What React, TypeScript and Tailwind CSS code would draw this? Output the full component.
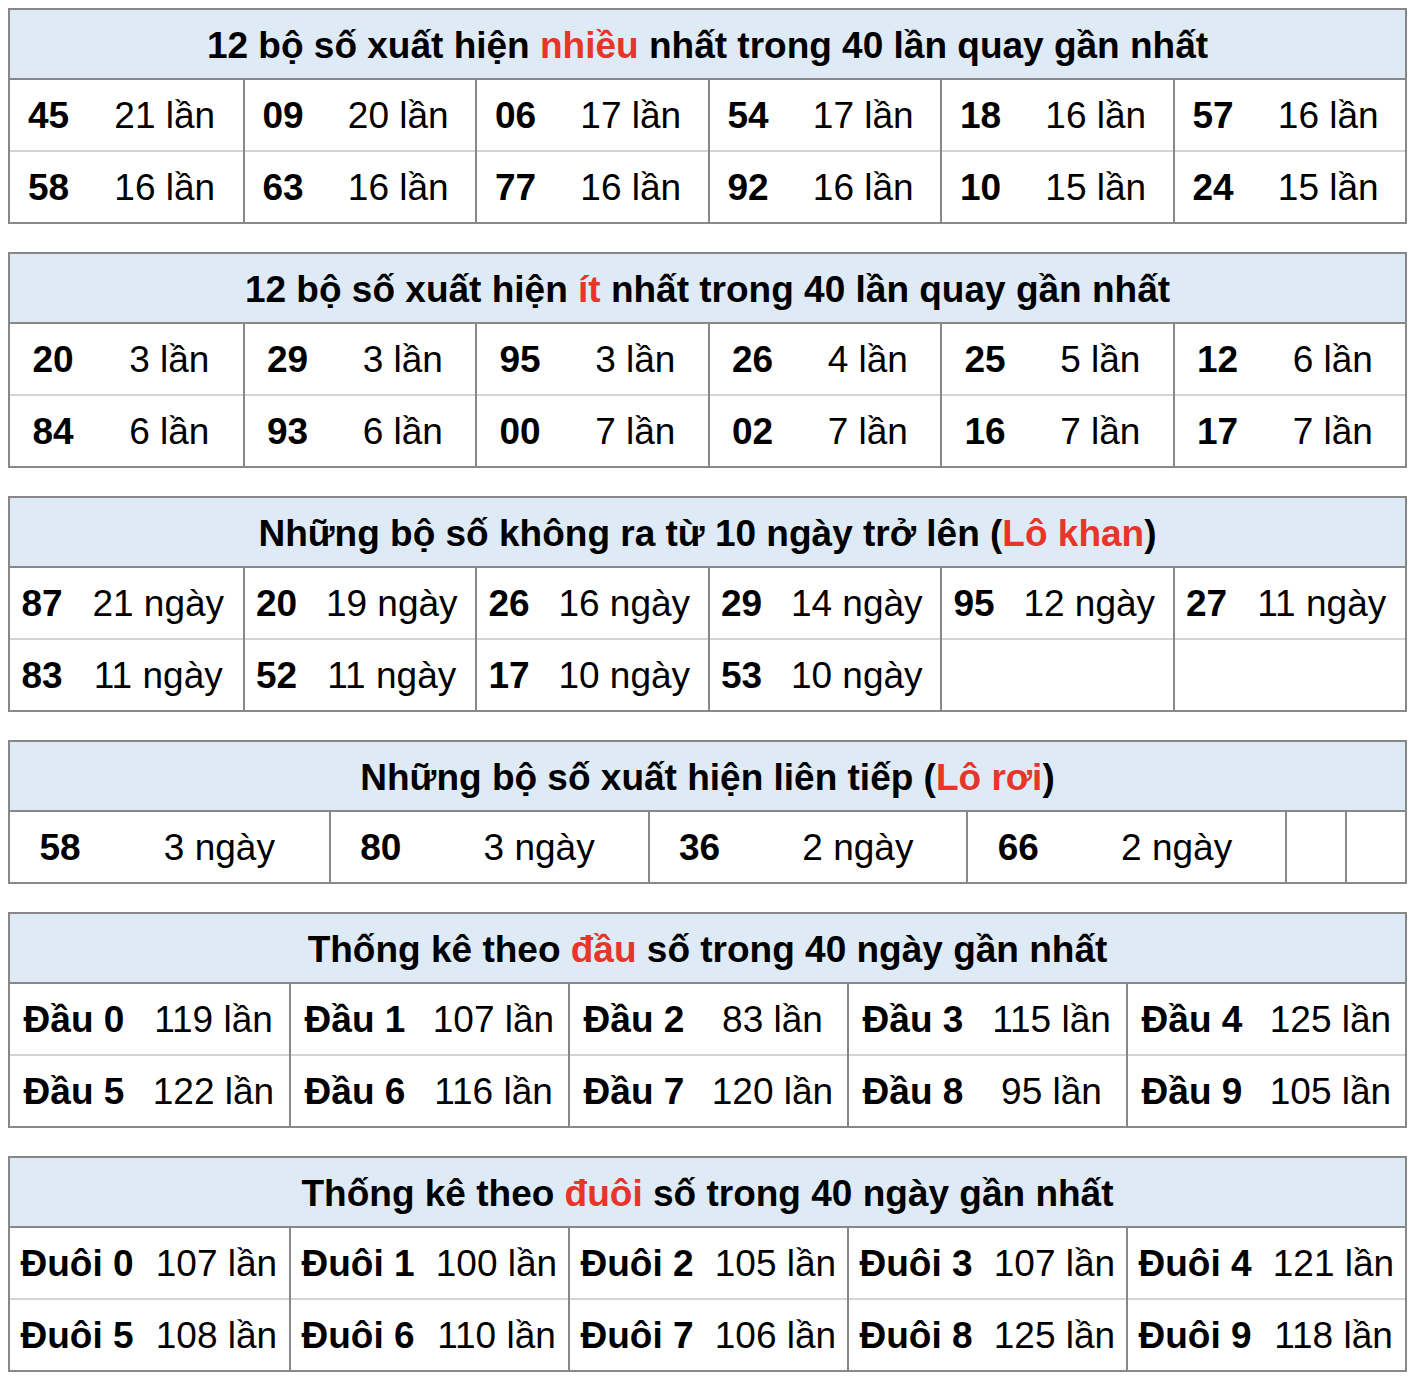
import React from "react";

type Cell = [string, string];

interface TableProps {
  title: React.ReactNode;
  rows: Cell[][];
  cols: string;
  numW: string;
}

const RED = "text-[#e8352a]";

function StatTable({ title, rows, cols, numW }: TableProps) {
  return (
    <div className="border-2 border-[#888888] bg-white">
      <div className="flex h-[70px] items-center justify-center border-b-2 border-[#888888] bg-[#deeaf6] pt-[2px] font-bold text-black">
        <span>{title}</span>
      </div>
      {rows.map((row, ri) => (
        <div key={ri} className={`grid ${cols}`}>
          {row.map(([num, count], ci) => (
            <div
              key={ci}
              className={`flex ${ci > 0 ? "border-l-2 border-[#888888]" : ""}`}
            >
              <div
                className={`flex items-center justify-center font-bold ${numW} ${
                  ri > 0 ? "h-[72px] border-t-2 border-[#d4d4d4]" : "h-[70px]"
                }`}
              >
                {num}
              </div>
              <div
                className={`flex flex-1 items-center justify-center whitespace-nowrap ${
                  ri > 0 ? "h-[72px] border-t-2 border-[#d4d4d4]" : "h-[70px]"
                }`}
              >
                {count}
              </div>
            </div>
          ))}
        </div>
      ))}
    </div>
  );
}

const most: Cell[][] = [
  [
    ["45", "21 lần"],
    ["09", "20 lần"],
    ["06", "17 lần"],
    ["54", "17 lần"],
    ["18", "16 lần"],
    ["57", "16 lần"],
  ],
  [
    ["58", "16 lần"],
    ["63", "16 lần"],
    ["77", "16 lần"],
    ["92", "16 lần"],
    ["10", "15 lần"],
    ["24", "15 lần"],
  ],
];

const least: Cell[][] = [
  [
    ["20", "3 lần"],
    ["29", "3 lần"],
    ["95", "3 lần"],
    ["26", "4 lần"],
    ["25", "5 lần"],
    ["12", "6 lần"],
  ],
  [
    ["84", "6 lần"],
    ["93", "6 lần"],
    ["00", "7 lần"],
    ["02", "7 lần"],
    ["16", "7 lần"],
    ["17", "7 lần"],
  ],
];

const khan: Cell[][] = [
  [
    ["87", "21 ngày"],
    ["20", "19 ngày"],
    ["26", "16 ngày"],
    ["29", "14 ngày"],
    ["95", "12 ngày"],
    ["27", "11 ngày"],
  ],
  [
    ["83", "11 ngày"],
    ["52", "11 ngày"],
    ["17", "10 ngày"],
    ["53", "10 ngày"],
    ["", ""],
    ["", ""],
  ],
];

const roi: Cell[][] = [
  [
    ["58", "3 ngày"],
    ["80", "3 ngày"],
    ["36", "2 ngày"],
    ["66", "2 ngày"],
    ["", ""],
    ["", ""],
  ],
];

const dau: Cell[][] = [
  [
    ["Đầu 0", "119 lần"],
    ["Đầu 1", "107 lần"],
    ["Đầu 2", "83 lần"],
    ["Đầu 3", "115 lần"],
    ["Đầu 4", "125 lần"],
  ],
  [
    ["Đầu 5", "122 lần"],
    ["Đầu 6", "116 lần"],
    ["Đầu 7", "120 lần"],
    ["Đầu 8", "95 lần"],
    ["Đầu 9", "105 lần"],
  ],
];

const duoi: Cell[][] = [
  [
    ["Đuôi 0", "107 lần"],
    ["Đuôi 1", "100 lần"],
    ["Đuôi 2", "105 lần"],
    ["Đuôi 3", "107 lần"],
    ["Đuôi 4", "121 lần"],
  ],
  [
    ["Đuôi 5", "108 lần"],
    ["Đuôi 6", "110 lần"],
    ["Đuôi 7", "106 lần"],
    ["Đuôi 8", "125 lần"],
    ["Đuôi 9", "118 lần"],
  ],
];

export default function App() {
  return (
    <div
      className="min-h-[1378px] w-[1412px] bg-white pl-[8px] pr-[5px] pt-[8px] text-[37px] leading-none text-black"
      style={{ fontFamily: '"Liberation Sans", Arial, Helvetica, sans-serif' }}
    >
      <div className="flex flex-col gap-[28px]">
        <StatTable
          title={
            <>
              12 bộ số xuất hiện <span className={RED}>nhiều</span> nhất trong
              40 lần quay gần nhất
            </>
          }
          rows={most}
          cols="grid-cols-6"
          numW="w-[77px]"
        />
        <StatTable
          title={
            <>
              12 bộ số xuất hiện <span className={RED}>ít</span> nhất trong 40
              lần quay gần nhất
            </>
          }
          rows={least}
          cols="grid-cols-6"
          numW="w-[86px]"
        />
        <StatTable
          title={
            <>
              Những bộ số không ra từ 10 ngày trở lên (
              <span className={RED}>Lô khan</span>)
            </>
          }
          rows={khan}
          cols="grid-cols-6"
          numW="w-[64px]"
        />
        <StatTable
          title={
            <>
              Những bộ số xuất hiện liên tiếp (<span className={RED}>Lô rơi</span>)
            </>
          }
          rows={roi}
          cols="grid-cols-[1fr_1fr_1fr_1fr_60px_60px]"
          numW="w-[100px]"
        />
        <StatTable
          title={
            <>
              Thống kê theo <span className={RED}>đầu</span> số trong 40 ngày
              gần nhất
            </>
          }
          rows={dau}
          cols="grid-cols-5"
          numW="w-[128px]"
        />
        <StatTable
          title={
            <>
              Thống kê theo <span className={RED}>đuôi</span> số trong 40 ngày
              gần nhất
            </>
          }
          rows={duoi}
          cols="grid-cols-5"
          numW="w-[134px]"
        />
      </div>
    </div>
  );
}
